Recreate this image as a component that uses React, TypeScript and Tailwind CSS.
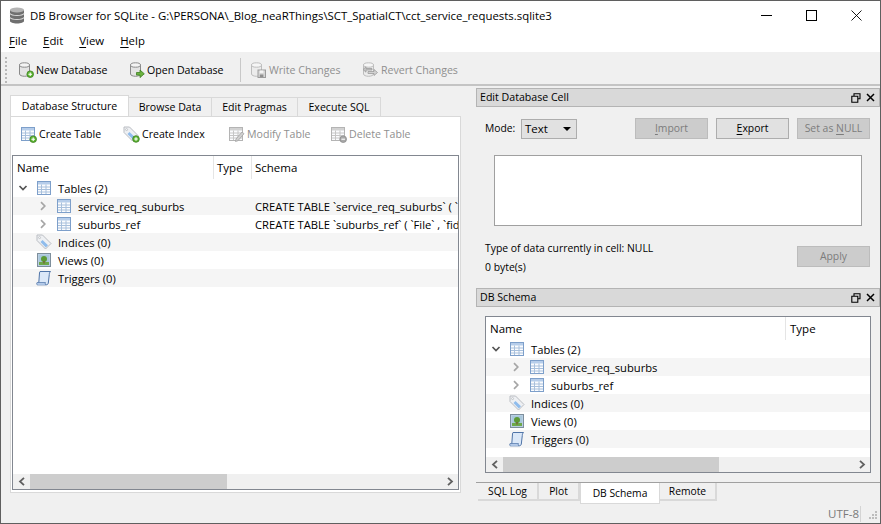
import React from 'react';

const Plus = ({ color = '#5cb531' }: { color?: string }) => (
    <>
        <circle cx="12.2" cy="12.2" r="3.3" fill={color} stroke="#3d7f22" strokeWidth="0.8" />
        <path d="M10.4 12.2h3.6M12.2 10.4v3.6" stroke="#fff" strokeWidth="1.1" />
    </>
);

const DbIcon = ({ gray }: { gray?: boolean }) => (
    <>
        <path d="M1.5 3v9c0 1.3 2.4 2.3 5 2.3s5-1 5-2.3V3z" fill={gray ? '#ececec' : '#e4e4e4'} stroke={gray ? '#bdbdbd' : '#8a8a8a'} />
        <ellipse cx="6.5" cy="3" rx="5" ry="2.2" fill={gray ? '#f6f6f6' : '#f4f4f4'} stroke={gray ? '#bdbdbd' : '#8a8a8a'} />
    </>
);

const NewDbIcon = () => (
    <svg width="16" height="16" viewBox="0 0 16 16" className="shrink-0">
        <DbIcon />
        <Plus />
    </svg>
);

const OpenDbIcon = () => (
    <svg width="16" height="16" viewBox="0 0 16 16" className="shrink-0">
        <DbIcon />
        <path d="M7.5 10.5h3.5V8l4.3 3.8-4.3 3.8v-2.5H7.5z" fill="#6cb33f" stroke="#3d7f22" strokeWidth="0.8" />
    </svg>
);

const WriteIcon = () => (
    <svg width="16" height="16" viewBox="0 0 16 16" className="mr-[1px] shrink-0">
        <DbIcon gray />
        <rect x="8" y="8" width="7.5" height="7.5" fill="#d6d6d6" stroke="#9c9c9c" />
        <rect x="9.8" y="8.5" width="3.6" height="2.4" fill="#f5f5f5" />
        <rect x="9.8" y="12.5" width="3.6" height="2.6" fill="#8f8f8f" />
    </svg>
);

const RevertIcon = () => (
    <svg width="16" height="16" viewBox="0 0 16 16" className="mr-[1px] shrink-0">
        <DbIcon gray />
        <path d="M6 9.5h6V7.5l3.5 3-3.5 3v-2H6z" fill="#d2d2d2" stroke="#9c9c9c" strokeWidth="0.8" />
        <path d="M10 6.5H4V4.8L1 7.5l3 2.700V8h6z" fill="#c4c4c4" stroke="#9c9c9c" strokeWidth="0.8" />
    </svg>
);

const TableGlyph = ({ gray }: { gray?: boolean }) => {
    const edge = gray ? '#b4b4b4' : '#7d9fca';
    const head = gray ? '#d2d2d2' : '#b6cdea';
    const line = gray ? '#c6c6c6' : '#a8c0dc';
    return (
        <>
            <rect x="0.5" y="0.5" width="13" height="13" fill="#fbfcfe" stroke={edge} />
            <rect x="1" y="1" width="12" height="2.500" fill={head} />
            <path d="M1 6h12M1 8.500h12M1 11h12M4.500 3.500V13M9 3.500V13" stroke={line} strokeWidth="1" />
        </>
    );
};

const TableIcon = () => (
    <svg width="14" height="14" viewBox="0 0 14 14" className="shrink-0">
        <TableGlyph />
    </svg>
);

const CreateTableIcon = () => (
    <svg width="16" height="16" viewBox="0 0 16 16" className="shrink-0">
        <TableGlyph />
        <Plus />
    </svg>
);

const ModifyTableIcon = () => (
    <svg width="16" height="16" viewBox="0 0 16 16" className="shrink-0">
        <TableGlyph gray />
        <path d="M7 12l6-7 2 1.700-6 7-2.500.800z" fill="#d0d0d0" stroke="#a2a2a2" strokeWidth="0.8" />
    </svg>
);

const DeleteTableIcon = () => (
    <svg width="16" height="16" viewBox="0 0 16 16" className="shrink-0">
        <TableGlyph gray />
        <circle cx="12.200" cy="12.200" r="3.300" fill="#a8a8a8" stroke="#8c8c8c" strokeWidth="0.8" />
        <path d="M10.400 12.200h3.600" stroke="#fff" strokeWidth="1.100" />
    </svg>
);

const TagGlyph = () => (
    <>
        <path d="M1 1h5.500l8.500 8.500-5.500 5.500L1 6.500z" fill="#eef0f3" stroke="#b9bcc2" />
        <path d="M6.500 6l5.500 5.300-2.200 2.200L4.500 8z" fill="#8fbcec" />
        <circle cx="3.600" cy="3.600" r="1" fill="#fff" stroke="#a8abb0" strokeWidth="0.6" />
    </>
);

const TagIcon = () => (
    <svg width="16" height="16" viewBox="0 0 16 16" className="shrink-0">
        <TagGlyph />
    </svg>
);

const CreateIndexIcon = () => (
    <svg width="17" height="17" viewBox="0 0 17 17" className="shrink-0">
        <TagGlyph />
        <g transform="translate(0.800 0.800)">
            <Plus />
        </g>
    </svg>
);

const ViewIcon = () => (
    <svg width="14" height="14" viewBox="0 0 14 14" className="shrink-0">
        <rect x="0.500" y="0.500" width="13" height="13" fill="#b9cfe4" stroke="#7e8f9c" />
        <rect x="2" y="2" width="10" height="10" fill="#a8c7da" />
        <rect x="2" y="9" width="10" height="3" fill="#6ea84a" />
        <circle cx="7" cy="6" r="3" fill="#5c9a35" />
        <rect x="6.400" y="8" width="1.200" height="2.500" fill="#7a5a36" />
    </svg>
);

const ScrollIcon = () => (
    <svg width="16" height="16" viewBox="0 0 16 16" className="shrink-0">
        <path d="M4 1.500h10.500c-1 1-1.200 2-1.200 3l-1 8.500c-.2 1.200-1 1.800-2 1.800H1.200c1-.5 1.500-1.300 1.600-2.300L3.500 3c.1-.8.200-1.200.500-1.500z" fill="#dbe8f8" stroke="#4f74a8" />
        <path d="M1.200 14.800c-.6-.5-.7-1.500-.2-2.200h8.500c-.4.700-.3 1.700.3 2.200" fill="#bcd2ee" stroke="#4f74a8" strokeWidth="0.8" />
    </svg>
);

const Chevron = ({ open }: { open?: boolean }) => (
    <svg width="10" height="10" viewBox="0 0 10 10" className="shrink-0">
        {open ? (
            <path d="M1.500 3l3.500 3.500L8.500 3" fill="none" stroke="#555" strokeWidth="1.700" />
        ) : (
            <path d="M3 1.200L6.800 5 3 8.800" fill="none" stroke="#a6a6a6" strokeWidth="1.700" />
        )}
    </svg>
);

const ArrowLeft = () => (
    <svg width="8" height="9" viewBox="0 0 8 9" className="shrink-0">
        <path d="M6 0.800L2 4.500 6 8.200" fill="none" stroke="#606060" strokeWidth="1.800" />
    </svg>
);

const ArrowRight = () => (
    <svg width="8" height="9" viewBox="0 0 8 9" className="shrink-0">
        <path d="M2 0.800L6 4.500 2 8.200" fill="none" stroke="#606060" strokeWidth="1.800" />
    </svg>
);

const U = ({ children }: { children: React.ReactNode }) => <span className="underline underline-offset-2">{children}</span>;

const ToolItem = ({ icon, label, disabled, className }: { icon: React.ReactNode; label: string; disabled?: boolean; className: string }) => (
    <div className={`flex items-center gap-[2px] text-[10.6px] ${disabled ? 'text-[#8f8f8f]' : 'text-black'} ${className}`}>
        {icon}
        <span>{label}</span>
    </div>
);

const Row = ({ striped, schema, children }: { striped?: boolean; schema?: string; children: React.ReactNode }) => (
    <div className={`flex h-[18px] items-center whitespace-nowrap text-[11.2px] [&_span]:pt-[1px] ${striped ? 'bg-[#f5f5f5]' : 'bg-white'}`}>
        <div className="flex w-[242px] shrink-0 items-center">{children}</div>
        {schema && <span>{schema}</span>}
    </div>
);

const Tree = ({ schema }: { schema?: boolean }) => {
    return (
        <div className="flex-1 overflow-hidden">
            <Row>
                <div className="ml-[5px] w-[10px]"><Chevron open /></div>
                <div className="ml-[9px] mr-[7px]"><TableIcon /></div>
                <span>Tables (2)</span>
            </Row>
            <Row striped schema={schema ? 'CREATE TABLE `service_req_suburbs` ( `' : undefined}>
                <div className="ml-[25px] w-[10px]"><Chevron /></div>
                <div className="ml-[9px] mr-[7px]"><TableIcon /></div>
                <span>service_req_suburbs</span>
            </Row>
            <Row schema={schema ? 'CREATE TABLE `suburbs_ref` ( `File` , `fid' : undefined}>
                <div className="ml-[25px] w-[10px]"><Chevron /></div>
                <div className="ml-[9px] mr-[7px]"><TableIcon /></div>
                <span>suburbs_ref</span>
            </Row>
            <Row striped>
                <div className="ml-[23px] mr-[6px]"><TagIcon /></div>
                <span>Indices (0)</span>
            </Row>
            <Row>
                <div className="ml-[24px] mr-[7px]"><ViewIcon /></div>
                <span>Views (0)</span>
            </Row>
            <Row striped>
                <div className="ml-[23px] mr-[6px]"><ScrollIcon /></div>
                <span>Triggers (0)</span>
            </Row>
        </div>
    );
};

const HScroll = ({ thumb }: { thumb: string }) => (
    <div className="flex h-[15px] items-center bg-[#f0f0f0]">
        <div className="flex w-[17px] justify-center"><ArrowLeft /></div>
        <div className={`h-full bg-[#cdcdcd] ${thumb}`} />
        <div className="flex-1" />
        <div className="flex w-[17px] justify-center"><ArrowRight /></div>
    </div>
);

const DockTitle = ({ title }: { title: string }) => (
    <div className="flex h-[19px] items-center border border-[#b4b4b4] bg-[#d9d9d9] pl-[3px] pr-[4px] text-[10.6px]">
        <span className="flex-1">{title}</span>
        <svg width="10" height="10" viewBox="0 0 10 10" className="mr-[5px]">
            <path d="M3 3V.800h6v5H7M.800 3.200h6v6h-6z" fill="none" stroke="#000" strokeWidth="1.100" />
        </svg>
        <svg width="9" height="9" viewBox="0 0 9 9">
            <path d="M1 1l7 7M8 1L1 8" fill="none" stroke="#000" strokeWidth="1.500" />
        </svg>
    </div>
);

const DockButton = ({ disabled, children, className }: { disabled?: boolean; children: React.ReactNode; className?: string }) => (
    <div className={`flex h-[21px] w-[73px] items-center justify-center border text-[10.4px] ${disabled ? 'border-[#bcbcbc] bg-[#cccccc] text-[#7c7c7c]' : 'border-[#adadad] bg-[#e1e1e1] text-black'} ${className ?? ''}`}>
        {children}
    </div>
);

const BottomTab = ({ label, active, className }: { label: string; active?: boolean; className: string }) => (
    <div className={`flex items-center justify-center text-[10.3px] ${active ? 'h-[21px] border-x border-b border-[#d9d9d9] bg-white pt-[1px]' : 'h-[18px] border-b-2 border-r-2 border-[#d9d9d9]'} ${className}`}>{label}</div>
);

const App: React.FC = () => {
    return (
        <div className="flex h-[524px] w-[881px] flex-col overflow-hidden border border-[#5f5f5f] bg-[#f0f0f0] text-[11.5px] leading-none text-black" style={{ fontFamily: '"Open Sans", "Liberation Sans", sans-serif' }}>
            {/* title bar */}
            <div className="flex h-[29px] items-center bg-white">
                <svg width="16" height="17" viewBox="0 0 16 17" className="ml-[8px] mr-[5px]">
                    <path d="M1 3v11c0 1.300 3 2.500 7 2.500s7-1.200 7-2.500V3z" fill="#6f6f6f" />
                    <ellipse cx="8" cy="3" rx="7" ry="2.500" fill="#b4b4b4" />
                    <path d="M1 6.500c1 1.400 4 2 7 2s6-.6 7-2M1 10.500c1 1.400 4 2 7 2s6-.6 7-2" fill="none" stroke="#d8d8d8" strokeWidth="1.200" />
                </svg>
                <span className="flex-1 text-[11.4px]">DB Browser for SQLite - G:\PERSONA\_Blog_neaRThings\SCT_SpatialCT\cct_service_requests.sqlite3</span>
                <svg width="11" height="11" viewBox="0 0 11 11" className="mr-[34px]"><path d="M0 5.500h11" stroke="#000" /></svg>
                <svg width="11" height="11" viewBox="0 0 11 11" className="mr-[34px]"><rect x="0.500" y="0.500" width="10" height="10" fill="none" stroke="#000" /></svg>
                <svg width="11" height="11" viewBox="0 0 11 11" className="mr-[18px]"><path d="M.500.500l10 10M10.500.500l-10 10" stroke="#000" strokeWidth="0.900" /></svg>
            </div>
            {/* menu */}
            <div className="flex h-[23px] items-center border-b border-[#f0f0f0] bg-white pl-[8px] text-[11.4px]">
                <span className="mr-[16px]"><U>F</U>ile</span>
                <span className="mr-[16px]"><U>E</U>dit</span>
                <span className="mr-[16px]"><U>V</U>iew</span>
                <span><U>H</U>elp</span>
            </div>
            {/* main toolbar */}
            <div className="flex h-[33px] items-center border-b-2 border-[#c4c4c4] bg-[#f0f0f0] pt-[3px]">
                <div className="ml-[4px] h-[26px] w-[3px] border-l-2 border-dotted border-[#b8b8b8]" />
                <ToolItem icon={<NewDbIcon />} label="New Database" className="ml-[10px] w-[111px]" />
                <ToolItem icon={<OpenDbIcon />} label="Open Database" className="w-[111px]" />
                <div className="h-[24px] w-px bg-[#c8c8c8]" />
                <ToolItem icon={<WriteIcon />} label="Write Changes" disabled className="ml-[9px] w-[112px]" />
                <ToolItem icon={<RevertIcon />} label="Revert Changes" disabled className="" />
            </div>
            {/* body */}
            <div className="flex flex-1">
                {/* left pane */}
                <div className="ml-[9px] mt-[9px] flex w-[451px] flex-col">
                    <div className="flex h-[21px] items-end text-[10.6px]">
                        <div className="flex h-[21px] w-[119px] items-center justify-center border-x border-t border-[#d9d9d9] bg-white">Database Structure</div>
                        <div className="flex h-[19px] w-[83px] items-center justify-center border-r border-t border-[#d9d9d9]">Browse Data</div>
                        <div className="flex h-[19px] w-[86px] items-center justify-center border-r border-t border-[#d9d9d9]">Edit Pragmas</div>
                        <div className="flex h-[19px] w-[83px] items-center justify-center border-r border-t border-[#d9d9d9]">Execute SQL</div>
                    </div>
                    <div className="flex h-[377px] flex-col border border-[#d9d9d9] bg-white">
                        <div className="flex h-[38px] items-center bg-white pb-[3px]">
                            <ToolItem icon={<CreateTableIcon />} label="Create Table" className="ml-[10px] w-[102px]" />
                            <ToolItem icon={<CreateIndexIcon />} label="Create Index" className="w-[106px]" />
                            <ToolItem icon={<ModifyTableIcon />} label="Modify Table" disabled className="w-[102px]" />
                            <ToolItem icon={<DeleteTableIcon />} label="Delete Table" disabled className="" />
                        </div>
                        <div className="ml-px mr-px flex flex-1 flex-col border border-[#828790] bg-white">
                            <div className="flex h-[23px] items-center">
                                <div className="flex h-full w-[201px] items-center border-r border-[#e5e5e5] pl-[4px]">Name</div>
                                <div className="flex h-full w-[38px] items-center border-r border-[#e5e5e5] pl-[3px]">Type</div>
                                <div className="pl-[3px]">Schema</div>
                            </div>
                            <Tree schema />
                            <HScroll thumb="w-[197px]" />
                        </div>
                        <div className="h-[2px]" />
                    </div>
                </div>
                {/* right docks */}
                <div className="ml-[15px] mt-[2px] flex w-[404px] flex-col">
                    <DockTitle title="Edit Database Cell" />
                    <div className="mt-[11px] flex h-[21px] items-center pl-[9px]">
                        <span className="w-[36px] text-[10.3px]">Mode:</span>
                        <div className="flex h-[20px] w-[56px] items-center justify-between border border-[#adadad] bg-[#e1e1e1] px-[3px]">
                            <span>Text</span>
                            <svg width="8" height="4" viewBox="0 0 8 4" className="mr-[2px]"><path d="M0 0h8L4 4z" fill="#000" /></svg>
                        </div>
                        <DockButton disabled className="ml-[58px]"><span><U>I</U>mport</span></DockButton>
                        <DockButton className="ml-[8px]"><span><U>E</U>xport</span></DockButton>
                        <DockButton disabled className="ml-[8px]"><span>Set as <U>N</U>ULL</span></DockButton>
                    </div>
                    <div className="ml-[18px] mt-[16px] h-[71px] w-[368px] border border-[#a0a0a0] bg-white" />
                    <div className="mt-[20px] flex h-[21px]">
                        <div className="-mt-[4px] flex-1 pl-[9px] text-[10.4px]">
                            <div className="h-[19px] pt-[1px]">Type of data currently in cell: NULL</div>
                            <div className="pt-[1px]">0 byte(s)</div>
                        </div>
                        <DockButton disabled className="mr-[10px]">Apply</DockButton>
                    </div>
                    <div className="mt-[21px]"><DockTitle title="DB Schema" /></div>
                    <div className="ml-[9px] mt-[9px] flex h-[157px] w-[386px] flex-col border border-[#828790] bg-white">
                        <div className="flex h-[23px] items-center">
                            <div className="flex h-full w-[300px] items-center border-r border-[#e5e5e5] pl-[4px]">Name</div>
                            <div className="pl-[4px]">Type</div>
                        </div>
                        <Tree />
                        <HScroll thumb="w-[216px]" />
                    </div>
                    {/* bottom tabs */}
                    <div className="mt-[9px] h-[22px] border-t border-[#a0a0a0]">
                        <div className="flex items-start pl-[2px]">
                            <BottomTab label="SQL Log" className="w-[61px]" />
                            <BottomTab label="Plot" className="w-[41px]" />
                            <BottomTab label="DB Schema" active className="w-[80px]" />
                            <BottomTab label="Remote" className="w-[57px] border-r-0" />
                        </div>
                    </div>
                    {/* status */}
                    <div className="flex flex-1 items-center justify-end text-[#7a7a7a]">
                        <span className="mr-[1px]">UTF-8</span>
                        <div className="h-[16px] w-px bg-[#d4d4d4]" />
                        <svg width="19" height="12" viewBox="0 0 19 12">
                            <path d="M14 9h2v2h-2zM11 9h2v2h-2zM8 9h2v2H8zM14 6h2v2h-2zM11 6h2v2h-2zM14 3h2v2h-2z" fill="#bdbdbd" />
                        </svg>
                    </div>
                </div>
            </div>
        </div>
    );
};

export default App;
